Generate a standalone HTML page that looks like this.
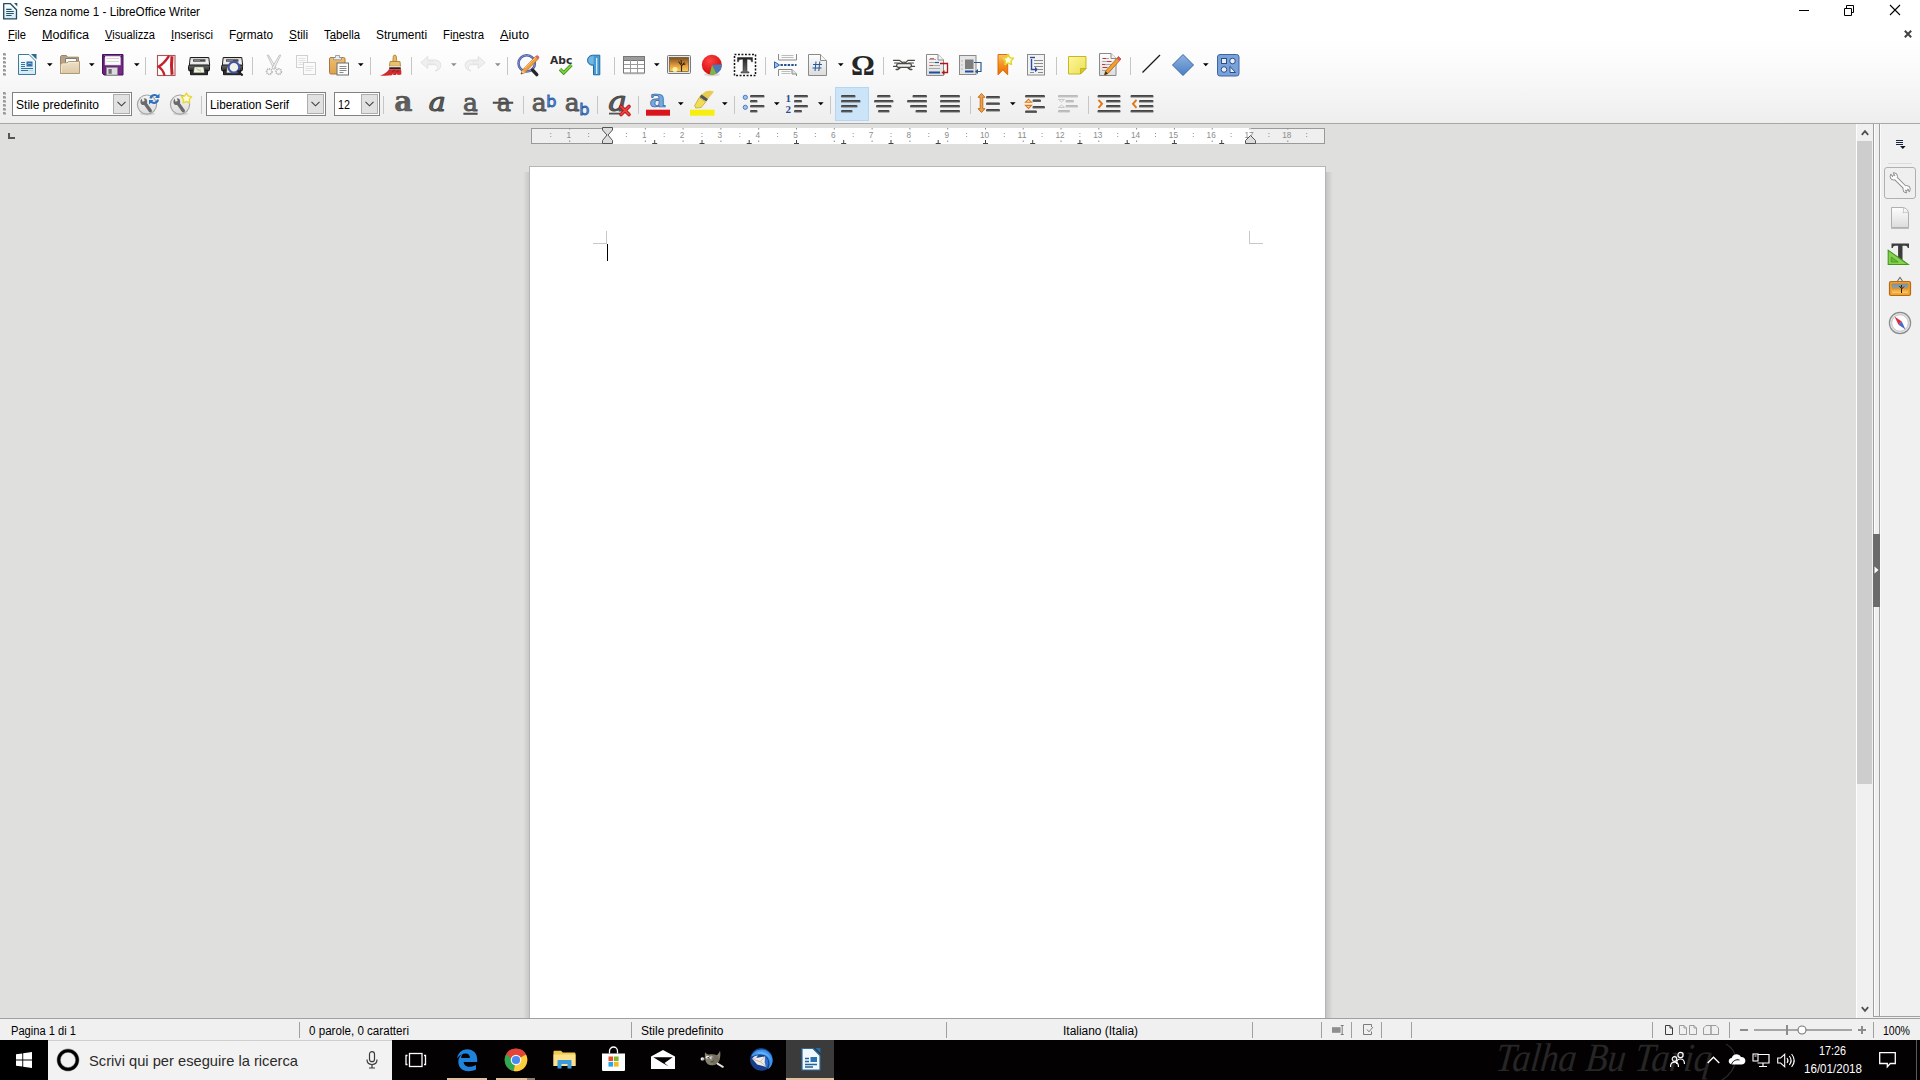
<!DOCTYPE html>
<html lang="it"><head><meta charset="utf-8"><title>Senza nome 1 - LibreOffice Writer</title>
<style>
html,body{margin:0;padding:0}
body{width:1920px;height:1080px;overflow:hidden;position:relative;background:#dfdfde;font-family:"Liberation Sans",sans-serif;font-size:12px;color:#000}
body div,body svg{position:absolute;display:block}
svg{overflow:visible}
u{text-decoration:underline;text-underline-offset:1px}
</style></head><body>
<div style="left:0px;top:0px;width:1920px;height:36px;background:#fff;"></div>
<div style="left:0px;top:36px;width:1920px;height:87px;background:linear-gradient(#fff,#fbfbfb 35%,#eeeeee);"></div>
<div style="left:0px;top:123px;width:1920px;height:1px;background:#a8a8a8;"></div>
<div style="left:24px;top:4px;font-size:12px;line-height:16px;color:#000;white-space:nowrap;transform-origin:0 0;transform:scaleX(0.9726);">Senza nome 1 - LibreOffice Writer</div>
<svg style="left:1799px;top:4px;" width="102" height="12" viewBox="0 0 102 12"><path d="M0 6.5h10" stroke="#000" fill="none"/><path d="M45.5 4.5h7v7h-7zM47.5 4.5v-3h7v7h-2" stroke="#000" fill="none"/><path d="M91 1l10 10M101 1l-10 10" stroke="#000" fill="none" stroke-width="1.1"/></svg>
<svg style="left:1904px;top:30px;" width="8" height="8" viewBox="0 0 8 8"><path d="M0.8 0.8l6.4 6.4M7.2 0.8l-6.4 6.4" stroke="#444" stroke-width="2" fill="none"/></svg>
<div style="left:8px;top:27px;font-size:12px;line-height:16px;color:#000;white-space:nowrap;transform-origin:0 0;transform:scaleX(0.9309);"><u>F</u>ile</div>
<div style="left:42px;top:27px;font-size:12px;line-height:16px;color:#000;white-space:nowrap;transform-origin:0 0;transform:scaleX(1.0518);"><u>M</u>odifica</div>
<div style="left:105px;top:27px;font-size:12px;line-height:16px;color:#000;white-space:nowrap;transform-origin:0 0;transform:scaleX(0.9293);"><u>V</u>isualizza</div>
<div style="left:171px;top:27px;font-size:12px;line-height:16px;color:#000;white-space:nowrap;transform-origin:0 0;transform:scaleX(0.9543);"><u>I</u>nserisci</div>
<div style="left:229px;top:27px;font-size:12px;line-height:16px;color:#000;white-space:nowrap;transform-origin:0 0;transform:scaleX(0.9848);">F<u>o</u>rmato</div>
<div style="left:289px;top:27px;font-size:12px;line-height:16px;color:#000;white-space:nowrap;transform-origin:0 0;transform:scaleX(0.9826);"><u>S</u>tili</div>
<div style="left:324px;top:27px;font-size:12px;line-height:16px;color:#000;white-space:nowrap;transform-origin:0 0;transform:scaleX(0.9467);">T<u>a</u>bella</div>
<div style="left:376px;top:27px;font-size:12px;line-height:16px;color:#000;white-space:nowrap;transform-origin:0 0;transform:scaleX(0.9932);">Str<u>u</u>menti</div>
<div style="left:443px;top:27px;font-size:12px;line-height:16px;color:#000;white-space:nowrap;transform-origin:0 0;transform:scaleX(0.9458);">Fi<u>n</u>estra</div>
<div style="left:500px;top:27px;font-size:12px;line-height:16px;color:#000;white-space:nowrap;transform-origin:0 0;transform:scaleX(1.0603);"><u>A</u>iuto</div>
<div style="left:8px;top:133px;width:2px;height:6px;background:#555;"></div>
<div style="left:8px;top:137px;width:7px;height:2px;background:#555;"></div>
<div style="left:531px;top:128px;width:794px;height:16px;background:#efefef;box-sizing:border-box;border:1px solid #9a9a9a;"></div>
<div style="left:607px;top:128px;width:644px;height:16px;background:#fff;"></div>
<svg style="left:0;top:127px" width="1400" height="20" viewBox="0 0 1400 20"><text x="568.7" y="11" font-size="9.5" fill="#8c8c8c" text-anchor="middle" font-family="Liberation Sans, sans-serif" textLength="4.6" lengthAdjust="spacingAndGlyphs">1</text><rect x="569.2" y="1" width="1" height="1.5" fill="#8a8a8a"/><rect x="569.2" y="13.5" width="1" height="1.5" fill="#8a8a8a"/><rect x="588.1" y="6" width="1" height="1" fill="#959595"/><rect x="588.1" y="9" width="1" height="1" fill="#959595"/><rect x="550.3" y="6" width="1" height="1" fill="#959595"/><rect x="550.3" y="9" width="1" height="1" fill="#959595"/><text x="644.3" y="11" font-size="9.5" fill="#8c8c8c" text-anchor="middle" font-family="Liberation Sans, sans-serif" textLength="4.6" lengthAdjust="spacingAndGlyphs">1</text><rect x="644.8" y="1" width="1" height="1.5" fill="#8a8a8a"/><rect x="644.8" y="13.5" width="1" height="1.5" fill="#8a8a8a"/><text x="682.1" y="11" font-size="9.5" fill="#8c8c8c" text-anchor="middle" font-family="Liberation Sans, sans-serif" textLength="4.6" lengthAdjust="spacingAndGlyphs">2</text><rect x="682.6" y="1" width="1" height="1.5" fill="#8a8a8a"/><rect x="682.6" y="13.5" width="1" height="1.5" fill="#8a8a8a"/><text x="719.9" y="11" font-size="9.5" fill="#8c8c8c" text-anchor="middle" font-family="Liberation Sans, sans-serif" textLength="4.6" lengthAdjust="spacingAndGlyphs">3</text><rect x="720.4" y="1" width="1" height="1.5" fill="#8a8a8a"/><rect x="720.4" y="13.5" width="1" height="1.5" fill="#8a8a8a"/><text x="757.7" y="11" font-size="9.5" fill="#8c8c8c" text-anchor="middle" font-family="Liberation Sans, sans-serif" textLength="4.6" lengthAdjust="spacingAndGlyphs">4</text><rect x="758.2" y="1" width="1" height="1.5" fill="#8a8a8a"/><rect x="758.2" y="13.5" width="1" height="1.5" fill="#8a8a8a"/><text x="795.5" y="11" font-size="9.5" fill="#8c8c8c" text-anchor="middle" font-family="Liberation Sans, sans-serif" textLength="4.6" lengthAdjust="spacingAndGlyphs">5</text><rect x="796.0" y="1" width="1" height="1.5" fill="#8a8a8a"/><rect x="796.0" y="13.5" width="1" height="1.5" fill="#8a8a8a"/><text x="833.3" y="11" font-size="9.5" fill="#8c8c8c" text-anchor="middle" font-family="Liberation Sans, sans-serif" textLength="4.6" lengthAdjust="spacingAndGlyphs">6</text><rect x="833.8" y="1" width="1" height="1.5" fill="#8a8a8a"/><rect x="833.8" y="13.5" width="1" height="1.5" fill="#8a8a8a"/><text x="871.1" y="11" font-size="9.5" fill="#8c8c8c" text-anchor="middle" font-family="Liberation Sans, sans-serif" textLength="4.6" lengthAdjust="spacingAndGlyphs">7</text><rect x="871.6" y="1" width="1" height="1.5" fill="#8a8a8a"/><rect x="871.6" y="13.5" width="1" height="1.5" fill="#8a8a8a"/><text x="908.9" y="11" font-size="9.5" fill="#8c8c8c" text-anchor="middle" font-family="Liberation Sans, sans-serif" textLength="4.6" lengthAdjust="spacingAndGlyphs">8</text><rect x="909.4" y="1" width="1" height="1.5" fill="#8a8a8a"/><rect x="909.4" y="13.5" width="1" height="1.5" fill="#8a8a8a"/><text x="946.7" y="11" font-size="9.5" fill="#8c8c8c" text-anchor="middle" font-family="Liberation Sans, sans-serif" textLength="4.6" lengthAdjust="spacingAndGlyphs">9</text><rect x="947.2" y="1" width="1" height="1.5" fill="#8a8a8a"/><rect x="947.2" y="13.5" width="1" height="1.5" fill="#8a8a8a"/><text x="984.5" y="11" font-size="9.5" fill="#8c8c8c" text-anchor="middle" font-family="Liberation Sans, sans-serif" textLength="9.2" lengthAdjust="spacingAndGlyphs">10</text><rect x="985.0" y="1" width="1" height="1.5" fill="#8a8a8a"/><rect x="985.0" y="13.5" width="1" height="1.5" fill="#8a8a8a"/><text x="1022.2" y="11" font-size="9.5" fill="#8c8c8c" text-anchor="middle" font-family="Liberation Sans, sans-serif" textLength="9.2" lengthAdjust="spacingAndGlyphs">11</text><rect x="1022.7" y="1" width="1" height="1.5" fill="#8a8a8a"/><rect x="1022.7" y="13.5" width="1" height="1.5" fill="#8a8a8a"/><text x="1060.0" y="11" font-size="9.5" fill="#8c8c8c" text-anchor="middle" font-family="Liberation Sans, sans-serif" textLength="9.2" lengthAdjust="spacingAndGlyphs">12</text><rect x="1060.5" y="1" width="1" height="1.5" fill="#8a8a8a"/><rect x="1060.5" y="13.5" width="1" height="1.5" fill="#8a8a8a"/><text x="1097.8" y="11" font-size="9.5" fill="#8c8c8c" text-anchor="middle" font-family="Liberation Sans, sans-serif" textLength="9.2" lengthAdjust="spacingAndGlyphs">13</text><rect x="1098.3" y="1" width="1" height="1.5" fill="#8a8a8a"/><rect x="1098.3" y="13.5" width="1" height="1.5" fill="#8a8a8a"/><text x="1135.6" y="11" font-size="9.5" fill="#8c8c8c" text-anchor="middle" font-family="Liberation Sans, sans-serif" textLength="9.2" lengthAdjust="spacingAndGlyphs">14</text><rect x="1136.1" y="1" width="1" height="1.5" fill="#8a8a8a"/><rect x="1136.1" y="13.5" width="1" height="1.5" fill="#8a8a8a"/><text x="1173.4" y="11" font-size="9.5" fill="#8c8c8c" text-anchor="middle" font-family="Liberation Sans, sans-serif" textLength="9.2" lengthAdjust="spacingAndGlyphs">15</text><rect x="1173.9" y="1" width="1" height="1.5" fill="#8a8a8a"/><rect x="1173.9" y="13.5" width="1" height="1.5" fill="#8a8a8a"/><text x="1211.2" y="11" font-size="9.5" fill="#8c8c8c" text-anchor="middle" font-family="Liberation Sans, sans-serif" textLength="9.2" lengthAdjust="spacingAndGlyphs">16</text><rect x="1211.7" y="1" width="1" height="1.5" fill="#8a8a8a"/><rect x="1211.7" y="13.5" width="1" height="1.5" fill="#8a8a8a"/><text x="1249.0" y="11" font-size="9.5" fill="#8c8c8c" text-anchor="middle" font-family="Liberation Sans, sans-serif" textLength="9.2" lengthAdjust="spacingAndGlyphs">17</text><rect x="1249.5" y="1" width="1" height="1.5" fill="#8a8a8a"/><rect x="1249.5" y="13.5" width="1" height="1.5" fill="#8a8a8a"/><text x="1286.8" y="11" font-size="9.5" fill="#8c8c8c" text-anchor="middle" font-family="Liberation Sans, sans-serif" textLength="9.2" lengthAdjust="spacingAndGlyphs">18</text><rect x="1287.3" y="1" width="1" height="1.5" fill="#8a8a8a"/><rect x="1287.3" y="13.5" width="1" height="1.5" fill="#8a8a8a"/><rect x="625.9" y="6" width="1" height="1" fill="#959595"/><rect x="625.9" y="9" width="1" height="1" fill="#959595"/><rect x="663.7" y="6" width="1" height="1" fill="#959595"/><rect x="663.7" y="9" width="1" height="1" fill="#959595"/><rect x="701.5" y="6" width="1" height="1" fill="#959595"/><rect x="701.5" y="9" width="1" height="1" fill="#959595"/><rect x="739.3" y="6" width="1" height="1" fill="#959595"/><rect x="739.3" y="9" width="1" height="1" fill="#959595"/><rect x="777.1" y="6" width="1" height="1" fill="#959595"/><rect x="777.1" y="9" width="1" height="1" fill="#959595"/><rect x="814.9" y="6" width="1" height="1" fill="#959595"/><rect x="814.9" y="9" width="1" height="1" fill="#959595"/><rect x="852.7" y="6" width="1" height="1" fill="#959595"/><rect x="852.7" y="9" width="1" height="1" fill="#959595"/><rect x="890.5" y="6" width="1" height="1" fill="#959595"/><rect x="890.5" y="9" width="1" height="1" fill="#959595"/><rect x="928.3" y="6" width="1" height="1" fill="#959595"/><rect x="928.3" y="9" width="1" height="1" fill="#959595"/><rect x="966.1" y="6" width="1" height="1" fill="#959595"/><rect x="966.1" y="9" width="1" height="1" fill="#959595"/><rect x="1003.8" y="6" width="1" height="1" fill="#959595"/><rect x="1003.8" y="9" width="1" height="1" fill="#959595"/><rect x="1041.6" y="6" width="1" height="1" fill="#959595"/><rect x="1041.6" y="9" width="1" height="1" fill="#959595"/><rect x="1079.4" y="6" width="1" height="1" fill="#959595"/><rect x="1079.4" y="9" width="1" height="1" fill="#959595"/><rect x="1117.2" y="6" width="1" height="1" fill="#959595"/><rect x="1117.2" y="9" width="1" height="1" fill="#959595"/><rect x="1155.0" y="6" width="1" height="1" fill="#959595"/><rect x="1155.0" y="9" width="1" height="1" fill="#959595"/><rect x="1192.8" y="6" width="1" height="1" fill="#959595"/><rect x="1192.8" y="9" width="1" height="1" fill="#959595"/><rect x="1230.6" y="6" width="1" height="1" fill="#959595"/><rect x="1230.6" y="9" width="1" height="1" fill="#959595"/><rect x="1268.4" y="6" width="1" height="1" fill="#959595"/><rect x="1268.4" y="9" width="1" height="1" fill="#959595"/><rect x="1306.2" y="6" width="1" height="1" fill="#959595"/><rect x="1306.2" y="9" width="1" height="1" fill="#959595"/><path d="M652.2 16.5h5M654.7 13v3.5" stroke="#444" fill="none"/><path d="M699.5 16.5h5M702.0 13v3.5" stroke="#444" fill="none"/><path d="M746.7 16.5h5M749.2 13v3.5" stroke="#444" fill="none"/><path d="M794.0 16.5h5M796.5 13v3.5" stroke="#444" fill="none"/><path d="M841.2 16.5h5M843.7 13v3.5" stroke="#444" fill="none"/><path d="M888.5 16.5h5M891.0 13v3.5" stroke="#444" fill="none"/><path d="M935.7 16.5h5M938.2 13v3.5" stroke="#444" fill="none"/><path d="M983.0 16.5h5M985.5 13v3.5" stroke="#444" fill="none"/><path d="M1030.2 16.5h5M1032.7 13v3.5" stroke="#444" fill="none"/><path d="M1077.4 16.5h5M1079.9 13v3.5" stroke="#444" fill="none"/><path d="M1124.7 16.5h5M1127.2 13v3.5" stroke="#444" fill="none"/><path d="M1171.9 16.5h5M1174.4 13v3.5" stroke="#444" fill="none"/><path d="M1219.2 16.5h5M1221.7 13v3.5" stroke="#444" fill="none"/><path d="M602.5 0.5h10v2.5l-4.5 5 4.5 5.5v3h-10v-3l4.5-5.5-4.5-5z" fill="#ddd" stroke="#555"/><path d="M1245.5 16.5v-3l5-5 5 5v3z" fill="#ddd" stroke="#555"/></svg>
<div style="left:523px;top:172px;width:6px;height:846px;background:linear-gradient(to right,rgba(0,0,0,0),rgba(0,0,0,.10));"></div>
<div style="left:1326px;top:172px;width:7px;height:846px;background:linear-gradient(to left,rgba(0,0,0,0),rgba(0,0,0,.12));"></div>
<div style="left:529px;top:166px;width:797px;height:852px;background:#b6b6b6;"></div>
<div style="left:530px;top:167px;width:795px;height:851px;background:#fff;"></div>
<div style="left:606px;top:231px;width:1px;height:13px;background:#c8c8c8;"></div>
<div style="left:593px;top:243px;width:13px;height:1px;background:#c8c8c8;"></div>
<div style="left:1249px;top:231px;width:1px;height:13px;background:#c8c8c8;"></div>
<div style="left:1249px;top:243px;width:14px;height:1px;background:#c8c8c8;"></div>
<div style="left:607px;top:244px;width:1px;height:17px;background:#000;"></div>
<div style="left:1856px;top:124px;width:17px;height:894px;background:#f0f0f0;"></div>
<div style="left:1856px;top:124px;width:1px;height:894px;background:#fdfdfd;"></div>
<div style="left:1857px;top:141px;width:15px;height:643px;background:#cdcdcd;"></div>
<svg style="left:1861px;top:129px;" width="8" height="7" viewBox="0 0 8 7"><path d="M0.8 5.8L4 2.2 7.2 5.8" stroke="#505050" stroke-width="1.8" fill="none"/></svg>
<svg style="left:1861px;top:1006px;" width="8" height="7" viewBox="0 0 8 7"><path d="M0.8 1.2L4 4.8 7.2 1.2" stroke="#505050" stroke-width="1.8" fill="none"/></svg>
<div style="left:1873px;top:124px;width:47px;height:894px;background:#f0f0f0;"></div>
<div style="left:1873px;top:124px;width:1px;height:894px;background:#a0a0a0;"></div>
<div style="left:1874px;top:124px;width:1px;height:894px;background:#fdfdfd;"></div>
<div style="left:1875px;top:124px;width:4px;height:894px;background:#f0f0f0;"></div>
<div style="left:1879px;top:124px;width:1px;height:894px;background:#a0a0a0;"></div>
<div style="left:1880px;top:124px;width:1px;height:892px;background:#fbfbfb;"></div>
<div style="left:1873px;top:1016px;width:47px;height:1px;background:#a0a0a0;"></div>
<div style="left:1873px;top:1017px;width:47px;height:1px;background:#f0f0f0;"></div>
<div style="left:1873px;top:534px;width:7px;height:73px;background:#6b6b6b;"></div>
<svg style="left:1874px;top:566px;" width="5" height="8" viewBox="0 0 5 8"><path d="M0.5 0.5L4.5 4 0.5 7.5z" fill="#fff"/></svg>
<div style="left:0px;top:1018px;width:1920px;height:1px;background:#a0a0a0;"></div>
<div style="left:0px;top:1019px;width:1920px;height:21px;background:#f0f0f0;"></div>
<div style="left:299px;top:1022px;width:1px;height:16px;background:#a0a0a0;"></div>
<div style="left:631px;top:1022px;width:1px;height:16px;background:#a0a0a0;"></div>
<div style="left:946px;top:1022px;width:1px;height:16px;background:#a0a0a0;"></div>
<div style="left:1252px;top:1022px;width:1px;height:16px;background:#a0a0a0;"></div>
<div style="left:1321px;top:1022px;width:1px;height:16px;background:#a0a0a0;"></div>
<div style="left:1351px;top:1022px;width:1px;height:16px;background:#a0a0a0;"></div>
<div style="left:1381px;top:1022px;width:1px;height:16px;background:#a0a0a0;"></div>
<div style="left:1411px;top:1022px;width:1px;height:16px;background:#a0a0a0;"></div>
<div style="left:1652px;top:1022px;width:1px;height:16px;background:#a0a0a0;"></div>
<div style="left:1729px;top:1022px;width:1px;height:16px;background:#a0a0a0;"></div>
<div style="left:1873px;top:1022px;width:1px;height:16px;background:#a0a0a0;"></div>
<div style="left:11px;top:1023px;font-size:12px;line-height:16px;color:#000;white-space:nowrap;transform-origin:0 0;transform:scaleX(0.9278);">Pagina 1 di 1</div>
<div style="left:309px;top:1023px;font-size:12px;line-height:16px;color:#000;white-space:nowrap;transform-origin:0 0;transform:scaleX(0.9672);">0 parole, 0 caratteri</div>
<div style="left:641px;top:1023px;font-size:12px;line-height:16px;color:#000;white-space:nowrap;transform-origin:0 0;transform:scaleX(0.9974);">Stile predefinito</div>
<div style="left:1063px;top:1023px;font-size:12px;line-height:16px;color:#000;white-space:nowrap;transform-origin:0 0;transform:scaleX(0.9951);">Italiano (Italia)</div>
<div style="left:1883px;top:1023px;font-size:12px;line-height:16px;color:#000;white-space:nowrap;transform-origin:0 0;transform:scaleX(0.8797);">100%</div>
<svg style="left:3px;top:3px;" width="15" height="17" viewBox="0 0 15 17"><path d="M.7 .7h6.800l6 6v9.200h-12.800z" fill="url(#gDoc)" stroke="#1f4c5e" stroke-width="1.300" stroke-linejoin="round"/><path d="M11 0h3.300v3.600z" fill="#1a5c74"/><path d="M3.200 6.400h5.400M3.200 8.500h7.600M3.200 10.500h7.600M3.200 12.500h5.400" stroke="#1f5568" stroke-width="1.100" fill="none"/></svg>
<svg style="left:1896px;top:140px;" width="10" height="10" viewBox="0 0 10 10"><path d="M0 .5h7M0 2.500h7M0 4.500h7" stroke="#1a2340" fill="none"/><path d="M4 6h5.600l-2.800 3z" fill="#10131c"/></svg>
<div style="left:1888px;top:163px;width:24px;height:1px;background:#dcdcdc;"></div>
<div style="left:1884px;top:167px;width:32px;height:32px;box-sizing:border-box;border:1px solid #b0b0b0;border-radius:3px;background:#efefef;"></div>
<svg style="left:1888px;top:171px;" width="24" height="24" viewBox="0 0 24 24"><path d="M7.3 6.9L17.1 16.7" stroke="#8f8f8f" stroke-width="4.400" stroke-linecap="round"/><circle cx="5.8" cy="5.4" r="3.700" fill="#fbfbfb" stroke="#8f8f8f" stroke-width="1"/><circle cx="18.6" cy="18.2" r="3.700" fill="#fbfbfb" stroke="#8f8f8f" stroke-width="1"/><path d="M7.3 6.9L17.1 16.7" stroke="#fbfbfb" stroke-width="2.400" stroke-linecap="round"/><path d="M5.70 5.23L3.25 0.87" stroke="#efefef" stroke-width="2.600"/><path d="M5.26 1.80L6.83 4.59A1.3 1.3 0 0 0 4.57 5.86L3.00 3.08" fill="none" stroke="#8f8f8f" stroke-width="1"/><path d="M18.68 18.38L20.65 22.98" stroke="#efefef" stroke-width="2.600"/><path d="M18.74 21.84L17.48 18.90A1.3 1.3 0 0 0 19.87 17.87L21.13 20.81" fill="none" stroke="#8f8f8f" stroke-width="1"/></svg>
<svg style="left:1890px;top:206px;" width="20" height="23" viewBox="0 0 20 23"><path d="M1.500 1.500h11.500c3 .5 5 2.500 5.500 5.500v14.500h-17z" fill="url(#gPaper)" stroke="#b0b0b0"/><path d="M13 1.500c.8 2 .8 3.800 0 5.200 1.800-.6 3.600-.5 5.500.3" fill="#f8f8f8" stroke="#b8b8b8" stroke-width=".8"/><path d="M1 22.500h18" stroke="#9a9a9a" stroke-opacity=".6"/></svg>
<svg style="left:1887px;top:242px;" width="24" height="24" viewBox="0 0 24 24"><path d="M4.500 1.500h17.500v4.500h-1.200c-.3-1.500-1-2.200-2.500-2.200h-2.800v13.700c0 1.200.6 1.500 2.300 1.500v1h-9v-1c1.700 0 2.300-.3 2.300-1.500v-13.700h-2.800c-1.500 0-2.200.7-2.500 2.200h-1.300z" fill="#3c3c3c"/><path d="M1.200 8.200v14.300h20z" fill="#8ad050" stroke="#3f9a20" stroke-width="1.100"/><path d="M4.200 15v5h7z" fill="#6cb83a" stroke="#3f9a20" stroke-width=".8"/></svg>
<svg style="left:1888px;top:276px;" width="24" height="21" viewBox="0 0 24 21"><path d="M9.500 5l2.500-3.500 2.500 3.500" fill="none" stroke="#6a6a6a" stroke-width="1.100"/><rect x="1.500" y="5.500" width="21" height="14" rx="1.500" fill="#f0a030" stroke="#b86a10" stroke-width="1.200"/><rect x="3.800" y="7.800" width="16.400" height="9.400" fill="url(#gSun)"/><rect x="3.800" y="7.800" width="16.400" height="4" fill="#7fa8c8" opacity=".75"/><path d="M13.500 17v-4.500l-2.200-2.500M13.500 13l2.500-2.500M13.500 11.500v-2.500" stroke="#2a1a0a" stroke-width="1" fill="none"/></svg>
<svg style="left:1888px;top:311px;" width="24" height="24" viewBox="0 0 24 24"><circle cx="12" cy="12" r="10.600" fill="#e4e4e4" stroke="#8c8c8c" stroke-width="1.200"/><circle cx="12" cy="12" r="8.300" fill="#fcfcfc" stroke="#b8b8b8" stroke-width=".8"/><path d="M6.500 5.500l7.300 5-3.300 3.300z" fill="#e02a3a"/><path d="M17.500 18.500l-7-4.700 3.300-3.300z" fill="#4a6ac8"/></svg>
<svg style="left:1332px;top:1025px;" width="12" height="10" viewBox="0 0 12 10"><rect x="0" y="2.200" width="8.600" height="5.600" fill="#8e8e8e"/><path d="M8.700 .5h3M8.700 9.500h3M10.200 .5v9" stroke="#7c7c7c" fill="none"/></svg>
<svg style="left:1363px;top:1024px;" width="11" height="11" viewBox="0 0 11 11"><path d="M8.500 3v-2.500h-8v10h8v-3" fill="none" stroke="#7c7c7c"/><path d="M4 5.500l2 2.300 4-4.800" fill="none" stroke="#7c7c7c"/></svg>
<svg style="left:1665px;top:1025px;" width="8" height="10" viewBox="0 0 8 10"><path d="M0.5 .5h4.500l2.500 2.500v6.500h-7z" fill="none" stroke="#3c3c3c"/><path d="M5 .5v2.500h2.500" fill="none" stroke="#3c3c3c"/></svg>
<svg style="left:1679px;top:1025px;" width="18" height="10" viewBox="0 0 18 10"><path d="M0.5 .5h4.500l2.500 2.500v6.500h-7z" fill="none" stroke="#9c9c9c"/><path d="M5 .5v2.500h2.500" fill="none" stroke="#9c9c9c"/><path d="M10.5 .5h4.500l2.500 2.500v6.500h-7z" fill="none" stroke="#9c9c9c"/><path d="M15 .5v2.500h2.500" fill="none" stroke="#9c9c9c"/></svg>
<svg style="left:1703px;top:1025px;" width="16" height="10" viewBox="0 0 16 10"><path d="M.5 9.500v-6.500l2.500-2.500h5v9zM8 9.500v-9h5l2.500 2.500v6.500z" fill="none" stroke="#9c9c9c"/></svg>
<div style="left:1740px;top:1029px;width:8px;height:2px;background:#8c8c8c;"></div>
<div style="left:1754px;top:1029px;width:98px;height:2px;background:#a6a6a6;"></div>
<div style="left:1786px;top:1025px;width:2px;height:10px;background:#8c8c8c;"></div>
<svg style="left:1797px;top:1025px;" width="10" height="10" viewBox="0 0 10 10"><circle cx="5" cy="5" r="4" fill="#fff" stroke="#767676" stroke-width="1.100"/></svg>
<div style="left:1858px;top:1029px;width:8px;height:2px;background:#8c8c8c;"></div>
<div style="left:1861px;top:1026px;width:2px;height:8px;background:#8c8c8c;"></div>
<svg width="0" height="0" style="left:0;top:0"><defs>
<linearGradient id="gDoc" x1="0" y1="0" x2="0" y2="1"><stop offset="0" stop-color="#fff"/><stop offset="1" stop-color="#d4e9f4"/></linearGradient>
<linearGradient id="gPaper" x1="0" y1="0" x2="0" y2="1"><stop offset="0" stop-color="#fdfdfd"/><stop offset="1" stop-color="#dcdcdc"/></linearGradient>
<linearGradient id="gFold" x1="0" y1="0" x2="0" y2="1"><stop offset="0" stop-color="#eee0c8"/><stop offset="1" stop-color="#dcc8a6"/></linearGradient>
<linearGradient id="gPurp" x1="0" y1="0" x2="1" y2="1"><stop offset="0" stop-color="#5a1a6a"/><stop offset="1" stop-color="#7a2c8e"/></linearGradient>
<linearGradient id="gPrn" x1="0" y1="0" x2="0" y2="1"><stop offset="0" stop-color="#f4f4f4"/><stop offset="1" stop-color="#b8b8b8"/></linearGradient>
<linearGradient id="gPrn2" x1="0" y1="0" x2="0" y2="1"><stop offset="0" stop-color="#c8c8c8"/><stop offset=".45" stop-color="#f4f4f4"/><stop offset="1" stop-color="#dedede"/></linearGradient>
<linearGradient id="gDark" x1="0" y1="0" x2="0" y2="1"><stop offset="0" stop-color="#6a6a6a"/><stop offset="1" stop-color="#2c2c2c"/></linearGradient>
<linearGradient id="gBar" x1="0" y1="0" x2="0" y2="1"><stop offset="0" stop-color="#3a3a3a"/><stop offset="1" stop-color="#6e6e6e"/></linearGradient>
<linearGradient id="gBlue" x1="0" y1="0" x2="0" y2="1"><stop offset="0" stop-color="#8fb3e0"/><stop offset="1" stop-color="#4a7fc4"/></linearGradient>
<linearGradient id="gYel" x1="0" y1="0" x2="1" y2="1"><stop offset="0" stop-color="#fdf6a0"/><stop offset="1" stop-color="#ece050"/></linearGradient>
<linearGradient id="gOr" x1="0" y1="0" x2="0" y2="1"><stop offset="0" stop-color="#f9c46a"/><stop offset=".5" stop-color="#f59020"/><stop offset="1" stop-color="#ea6c00"/></linearGradient>
<linearGradient id="gClip" x1="0" y1="0" x2="0" y2="1"><stop offset="0" stop-color="#efbe70"/><stop offset="1" stop-color="#dda24c"/></linearGradient>
<linearGradient id="gSun" x1="0" y1="0" x2="0" y2="1"><stop offset="0" stop-color="#7a5020"/><stop offset="0.6" stop-color="#e8a040"/><stop offset="1" stop-color="#f8d060"/></linearGradient>
<radialGradient id="gRed" cx="0.4" cy="0.3" r="0.8"><stop offset="0" stop-color="#f44"/><stop offset="1" stop-color="#c00"/></radialGradient>
<linearGradient id="gT" x1="0" y1="0" x2="0" y2="1"><stop offset="0" stop-color="#222"/><stop offset="1" stop-color="#707070"/></linearGradient>
<linearGradient id="gCirc" x1="0" y1="0" x2="0" y2="1"><stop offset="0" stop-color="#f4f4f4"/><stop offset="1" stop-color="#dcdcdc"/></linearGradient>
<linearGradient id="gA" x1="0" y1="0" x2="0" y2="1"><stop offset="0" stop-color="#4a4a4a"/><stop offset="1" stop-color="#6c6c6c"/></linearGradient>
</defs></svg>
<svg style="left:3px;top:53px" width="4" height="24" viewBox="0 0 4 24"><path d="M0 0h2l1 1v1.5h-3z" fill="#9a9a9a"/><path d="M0 4h2l1 1v1.5h-3z" fill="#9a9a9a"/><path d="M0 8h2l1 1v1.5h-3z" fill="#9a9a9a"/><path d="M0 12h2l1 1v1.5h-3z" fill="#9a9a9a"/><path d="M0 16h2l1 1v1.5h-3z" fill="#9a9a9a"/><path d="M0 20h2l1 1v1.5h-3z" fill="#9a9a9a"/></svg>
<svg style="left:3px;top:92px" width="4" height="24" viewBox="0 0 4 24"><path d="M0 0h2l1 1v1.5h-3z" fill="#9a9a9a"/><path d="M0 4h2l1 1v1.5h-3z" fill="#9a9a9a"/><path d="M0 8h2l1 1v1.5h-3z" fill="#9a9a9a"/><path d="M0 12h2l1 1v1.5h-3z" fill="#9a9a9a"/><path d="M0 16h2l1 1v1.5h-3z" fill="#9a9a9a"/><path d="M0 20h2l1 1v1.5h-3z" fill="#9a9a9a"/></svg>
<svg style="left:15px;top:53px" width="24" height="24" viewBox="0 0 24 24"><path d="M3.5 1.5h10.5l6.5 6.5v13.5h-17z" fill="url(#gDoc)" stroke="#3d7b9e"/><path d="M16 1h5.5v5.5z" fill="#2b6a8c"/><path d="M6 9.5h4M6 11.5h4M6 13.5h4M6 15.5h12M6 17.5h7" stroke="#2f7797" fill="none"/><path d="M13 17.5h5" stroke="#b9d3e0" fill="none"/><rect x="11.5" y="8.5" width="6" height="5" fill="#2f6fa3"/><path d="M12.5 11.5l1.5-1.5 1 1 .8-.8 1 1.300" stroke="#a8c8e8" fill="none" stroke-width=".8"/></svg>
<svg style="left:47px;top:63px" width="6" height="4" viewBox="0 0 6 4"><path d="M0 0.3h5.6L2.8 3.3z" fill="#000"/></svg>
<svg style="left:58px;top:53px" width="24" height="24" viewBox="0 0 24 24"><path d="M2.500 20.500v-16.800l.9-1.200h5l1.200 1.700h10.900v16.300z" fill="#b7a288" stroke="#9a8565" stroke-linejoin="round"/><path d="M7.500 5.500h11v8h-11z" fill="url(#gPaper)" stroke="#7d7d7d"/><path d="M9 7.200h8" stroke="#fff" stroke-width="1.400"/><path d="M2.500 20.500v-8.500l1.500-2h5l1.500-1.500h11v12z" fill="url(#gFold)" stroke="#b09a76" stroke-linejoin="round"/><path d="M3.500 19.500v-7l1-1.500h5l1.500-1.500h9.500" fill="none" stroke="#f6ecd8" stroke-width=".8"/></svg>
<svg style="left:89px;top:63px" width="6" height="4" viewBox="0 0 6 4"><path d="M0 0.3h5.6L2.8 3.3z" fill="#000"/></svg>
<svg style="left:101px;top:53px" width="24" height="24" viewBox="0 0 24 24"><path d="M1.500 1.500h20.500v20.500h-19l-1.500-1.500z" fill="url(#gPurp)" stroke="#47125a" stroke-linejoin="round"/><rect x="4" y="2.500" width="15.500" height="9.500" fill="#fbfbfb" stroke="#cfc4d6" stroke-width=".6"/><path d="M4 2.700h15.500" stroke="#5b1d70" stroke-width=".9"/><path d="M5.500 5.500h12.500M5.500 8.500h12.500" stroke="#cdcdcd" fill="none" stroke-width=".8"/><path d="M3.500 3.200v1M20 3.200v1" stroke="#2a0a36" stroke-width="1"/><rect x="5.500" y="14.500" width="11" height="7.500" fill="#dcdcdc" stroke="#8a8a8a" stroke-width=".7"/><rect x="7.500" y="16" width="3.200" height="4.800" fill="#6e6e6e"/></svg>
<svg style="left:134px;top:63px" width="6" height="4" viewBox="0 0 6 4"><path d="M0 0.3h5.6L2.8 3.3z" fill="#000"/></svg>
<div style="left:145px;top:57px;width:1px;height:18px;background:#c6c6c6;"></div>
<svg style="left:154px;top:53px" width="24" height="24" viewBox="0 0 24 24"><rect x="3.500" y="2.500" width="17.500" height="20" fill="#fdfdfd" stroke="#a85858" stroke-width="1.100"/><path d="M14.600 3.500Q10 10.500 4.800 13.600Q8.800 16.500 10.300 21.500" fill="none" stroke="#c4212c" stroke-width="2.300" stroke-linecap="round"/><path d="M5 13.600l-1.500 0" stroke="#c4212c" stroke-width="1.600"/><path d="M18 3.200Q16.900 12.500 18.100 21.800" fill="none" stroke="#c4212c" stroke-width="3"/></svg>
<svg style="left:187px;top:53px" width="24" height="24" viewBox="0 0 24 24"><path d="M2.300 12.500l.9-8h18.600l.9 8z" fill="url(#gPrn2)" stroke="#1e1e1e" stroke-linejoin="round"/><rect x="6" y="6.200" width="12.500" height="2.600" rx=".5" fill="#4a4a4a"/><path d="M7.500 7.500h1M9.500 7.500h1M11.500 7.500h1" stroke="#c4c4c4" stroke-width=".9"/><rect x="1.500" y="12" width="21" height="6" rx="1.500" fill="url(#gDark)" stroke="#161616"/><path d="M3.500 21.700v-4.500h17v4.500z" fill="#2c2c2c" stroke="#161616"/><path d="M6.300 20l.9-6.300h9.600l.9 6.300z" fill="#eef5e2" stroke="#333" stroke-width=".7"/><path d="M9 15.500l5 3M10 17h4" stroke="#b8cc90" stroke-width=".8" fill="none"/></svg>
<svg style="left:220px;top:53px" width="24" height="24" viewBox="0 0 24 24"><path d="M2.300 12.500l.9-8h18.600l.9 8z" fill="url(#gPrn2)" stroke="#1e1e1e" stroke-linejoin="round"/><rect x="6" y="6.200" width="12.500" height="2.600" rx=".5" fill="#4a4a4a"/><path d="M7.500 7.500h1M9.500 7.500h1M11.500 7.500h1" stroke="#c4c4c4" stroke-width=".9"/><rect x="1.500" y="12" width="21" height="6" rx="1.500" fill="url(#gDark)" stroke="#161616"/><path d="M3.500 21.700v-4.500h17v4.500z" fill="#2c2c2c" stroke="#161616"/><path d="M6.300 20l.9-6.300h9.600l.9 6.300z" fill="#eef5e2" stroke="#333" stroke-width=".7"/><path d="M9 15.500l5 3M10 17h4" stroke="#b8cc90" stroke-width=".8" fill="none"/><circle cx="13.900" cy="14.200" r="5.300" fill="#f0f4e6" stroke="#4456a8" stroke-width="2.100"/><path d="M18.200 18.500l3.800 3.300" stroke="#222" stroke-width="2.200" stroke-linecap="round"/></svg>
<div style="left:252px;top:57px;width:1px;height:18px;background:#c6c6c6;"></div>
<svg style="left:262px;top:53px" width="24" height="24" viewBox="0 0 24 24"><g fill="#f6f6f6" stroke="#bcbcbc" stroke-width=".9" stroke-linejoin="round"><path d="M5.200 2.200l1.300-.2 7.600 13-2 1.200z"/><path d="M18.800 2.200l-1.300-.2-7.600 13 2 1.200z"/></g><g fill="#f8f8f8" stroke="#b4b4b4" stroke-width="1.700" stroke-dasharray="1.300 .7"><circle cx="7.300" cy="18.600" r="2.700"/><circle cx="16.700" cy="18.600" r="2.700"/></g></svg>
<svg style="left:294px;top:53px" width="24" height="24" viewBox="0 0 24 24"><g opacity=".8"><rect x="2.500" y="2.500" width="11" height="12" fill="#fbfbfb" stroke="#c6c6c6"/><path d="M4.500 5.500h7M4.500 7.500h7M4.500 9.500h7M4.500 11.500h5" stroke="#dcdcdc" fill="none"/><rect x="9.500" y="9.500" width="12" height="12" fill="#fbfbfb" stroke="#c6c6c6"/><path d="M11.500 13.500h8M11.500 15.500h8M11.500 17.500h6" stroke="#dcdcdc" fill="none"/></g></svg>
<svg style="left:327px;top:53px" width="24" height="24" viewBox="0 0 24 24"><rect x="2.500" y="4.500" width="15.500" height="16.500" rx="1.500" fill="url(#gClip)" stroke="#a8783a"/><path d="M6.500 6.800v-2.300h2v-2h4v2h2v2.300z" fill="#ececec" stroke="#8a8a8a" stroke-width=".8"/><rect x="10" y="10" width="11.500" height="12" fill="#fcfcfc" stroke="#6e6e6e"/><path d="M12.500 13.500h7M12.500 15.500h7M12.500 17.500h7M12.500 19.500h4" stroke="#8a8a8a" fill="none"/></svg>
<svg style="left:358px;top:63px" width="6" height="4" viewBox="0 0 6 4"><path d="M0 0.3h5.6L2.8 3.3z" fill="#000"/></svg>
<div style="left:370px;top:57px;width:1px;height:18px;background:#c6c6c6;"></div>
<svg style="left:379px;top:53px" width="24" height="24" viewBox="0 0 24 24"><path d="M14.300 3.300c.2-1.600 2.800-1.600 3 0l.5 5.500h-4z" fill="#e9b964" stroke="#a87a2c" stroke-width=".8"/><path d="M11 8.500h10l.5 4.800h-11z" fill="#e8c070" stroke="#a87a2c" stroke-width=".8"/><path d="M10.500 13.200h11l.1 1.200h-11.200z" fill="#f2efe6"/><path d="M10.400 14.300h11.200l.3 2h-11.800z" fill="#262222"/><path d="M10 16.200h12c.4 2 .5 3.600.3 5.300-1.500.4-2.800.5-4 .3l-.3-1.600-.9 1.800c-1 .1-2 .1-3-.1l.2-1.600-1.400 2c-3.500.5-8 .6-11.900.2 4-1.300 7.500-3.500 9-6.300z" fill="#cf2a2c"/><path d="M13 18.500l3-1.500M17 19l3-1.500" stroke="#8a1418" stroke-width=".7"/></svg>
<div style="left:411px;top:57px;width:1px;height:18px;background:#c6c6c6;"></div>
<svg style="left:419px;top:53px" width="24" height="24" viewBox="0 0 24 24"><path d="M8.800 3.500l-7 6 7 6v-3.800h6c2.500 0 3.800 1.200 3.800 3 0 1.500-.9 2.600-2.500 3.300 3.600-.6 5.700-2.800 5.700-5.800 0-3.200-2.600-5.200-6.600-5.200h-6.400z" fill="#efefef" stroke="#e0e0e0" stroke-width=".9"/><path d="M8 8.200h7M8 10.800h7" stroke="#e2e2e2" stroke-width=".7"/></svg>
<svg style="left:451px;top:63px" width="6" height="4" viewBox="0 0 6 4"><path d="M0 0.3h5.6L2.8 3.3z" fill="#8c8c8c"/></svg>
<svg style="left:463px;top:53px" width="24" height="24" viewBox="0 0 24 24"><g transform="translate(24 0) scale(-1 1)"><path d="M8.800 3.500l-7 6 7 6v-3.800h6c2.500 0 3.800 1.200 3.800 3 0 1.500-.9 2.600-2.500 3.300 3.600-.6 5.700-2.800 5.700-5.800 0-3.200-2.600-5.200-6.600-5.200h-6.400z" fill="#efefef" stroke="#e0e0e0" stroke-width=".9"/><path d="M8 8.200h7M8 10.800h7" stroke="#e2e2e2" stroke-width=".7"/></g></svg>
<svg style="left:495px;top:63px" width="6" height="4" viewBox="0 0 6 4"><path d="M0 0.3h5.6L2.8 3.3z" fill="#8c8c8c"/></svg>
<div style="left:507px;top:57px;width:1px;height:18px;background:#c6c6c6;"></div>
<svg style="left:516px;top:53px" width="24" height="24" viewBox="0 0 24 24"><circle cx="10.700" cy="10.400" r="8.200" fill="#f6f8fb" fill-opacity=".6" stroke="#4a5aa8" stroke-width="2.500"/><circle cx="10.700" cy="10.400" r="8.200" fill="none" stroke="#8e9ad0" stroke-width=".8"/><path d="M16.500 17l4.300 4.600" stroke="#26262a" stroke-width="3.400" stroke-linecap="round"/><path d="M19.300 3.600l2.800 2.600-13.300 13.600-3.800 1.300 1.100-3.700z" fill="#f0a03a" stroke="#a8641a" stroke-width=".7"/><path d="M9.200 12.800l11-11" stroke="#fbd08a" stroke-width="1" fill="none" transform="translate(-.6 2.400)"/><path d="M19.300 3.600l1.200-1.200c.9-.8 3.500 1.600 2.700 2.600l-1.100 1.200z" fill="#e4606a"/><path d="M5 21.100l1.100-3.700.9.300 1.300 1.300.4 1z" fill="#e8c89a"/><path d="M5 21.100l.5-1.700 1.300 1.200z" fill="#2a2018"/></svg>
<svg style="left:549px;top:53px" width="26" height="24" viewBox="0 0 26 24"><text x="1" y="10.700" font-family="DejaVu Sans, sans-serif" font-weight="bold" font-size="11" fill="#2c2c2e" textLength="22.300" lengthAdjust="spacingAndGlyphs">Abc</text><path d="M11 16.200l3.700 3.700 7.800-8" fill="none" stroke="#3f8f1c" stroke-width="3.400"/><path d="M11 16.200l3.700 3.700 7.800-8" fill="none" stroke="#7fd63e" stroke-width="1.700"/></svg>
<svg style="left:582px;top:53px" width="24" height="24" viewBox="0 0 24 24"><path d="M10.600 2.200h7.200v19.600h-6.300v-9.500h-.9a5.050 5.050 0 0 1 0-10.100z" fill="#4a9ad2" stroke="#1d6ba4" stroke-width="1"/><path d="M10.300 3.200a3.900 3.900 0 0 0 0 7.800h1.300v-7.800z" fill="#7cbde8" opacity=".8"/><rect x="14" y="5" width="1.300" height="16" fill="#cdeafa"/></svg>
<div style="left:614px;top:57px;width:1px;height:18px;background:#c6c6c6;"></div>
<svg style="left:622px;top:53px" width="24" height="24" viewBox="0 0 24 24"><rect x="1.500" y="3.500" width="21" height="16.500" fill="#fff" stroke="#777"/><rect x="2" y="4" width="20" height="3.500" fill="#9c9c9c"/><path d="M2 7.500h20" stroke="#777" fill="none"/><path d="M2 11.500h20M2 15.500h20M8.500 4v16M15.500 4v16" stroke="#9a9a9a" fill="none"/><path d="M2 21h20" stroke="#000" stroke-opacity=".15"/></svg>
<svg style="left:654px;top:63px" width="6" height="4" viewBox="0 0 6 4"><path d="M0 0.3h5.6L2.8 3.3z" fill="#000"/></svg>
<svg style="left:667px;top:53px" width="24" height="24" viewBox="0 0 24 24"><rect x=".5" y="2.500" width="23" height="18" rx="1" fill="#e8e8e8" stroke="#7a7a7a"/><rect x="2.500" y="4.500" width="19" height="14" fill="url(#gSun)" stroke="#5a4020" stroke-width=".6"/><circle cx="8" cy="16.500" r="2.500" fill="#fff2a0"/><path d="M14.500 18.500v-6l-3-4M14.500 13l3-3.500M14.500 11l-.5-4M16 11.500l2.500-.5" stroke="#3a2410" stroke-width="1.100" fill="none"/></svg>
<svg style="left:700px;top:53px" width="24" height="24" viewBox="0 0 24 24"><ellipse cx="12" cy="21.500" rx="8" ry="1.800" fill="#000" opacity=".13"/><circle cx="11.800" cy="11.800" r="10" fill="url(#gRed)"/><path d="M12 12L21.800 11.300A10 10 0 0 1 16.500 20.600z" fill="#4a7ab8"/><path d="M12 12L16.500 20.600A10 10 0 0 1 9.600 21.600z" fill="#7ab848"/></svg>
<svg style="left:733px;top:53px" width="24" height="24" viewBox="0 0 24 24"><rect x="1.500" y="1.500" width="21" height="21" fill="#fdfdfd" stroke="#111" stroke-width="1.500" stroke-dasharray="1.900 1.600"/><path d="M4.500 4.500h15v4.300h-1c-.3-1.800-1-2.500-2.500-2.500h-2v11.200c0 1.100.5 1.400 2 1.400v1.100h-8v-1.100c1.500 0 2-.3 2-1.400v-11.200h-2c-1.500 0-2.200.7-2.500 2.500h-1z" fill="url(#gT)" stroke="#2a2a2a" stroke-width=".5"/></svg>
<div style="left:765px;top:57px;width:1px;height:18px;background:#c6c6c6;"></div>
<svg style="left:773px;top:53px" width="24" height="24" viewBox="0 0 24 24"><path d="M5.500 1v6h18v-6" fill="#fafafa" stroke="#8a8a8a"/><path d="M8.500 2.500h12M8.500 4.500h12" stroke="#bdbdbd"/><path d="M5.500 23v-6.500h13.500l4.500 4.500v2" fill="#fafafa" stroke="#8a8a8a"/><path d="M8.500 18.500h9M8.500 20.500h9" stroke="#bdbdbd"/><path d="M19 16.500v4.500h4.500" fill="#e4e4e4" stroke="#8a8a8a"/><path d="M1.500 8.800l5 3.200-5 3.200z" fill="#9cc0ee" stroke="#2f62a8"/><path d="M7.500 12h16" stroke="#27508f" stroke-width="2" stroke-dasharray="2.400 1.200"/></svg>
<svg style="left:806px;top:53px" width="24" height="24" viewBox="0 0 24 24"><path d="M2.500 1.500h12l6 6v15h-18z" fill="url(#gPaper)" stroke="#8a8a8a"/><path d="M14.500 1.500v6h6" fill="#f6f6f6" stroke="#8a8a8a"/><path d="M10 8.500l-1 9.500M13.800 8.500l-1 9.500M7 11.500h9M6.500 15h9" stroke="#2a5a9a" stroke-width="1.050" fill="none"/></svg>
<svg style="left:838px;top:63px" width="6" height="4" viewBox="0 0 6 4"><path d="M0 0.3h5.6L2.8 3.3z" fill="#000"/></svg>
<div style="left:851px;top:50px;width:24px;text-align:center;font-family:'Liberation Serif',serif;font-weight:bold;font-size:29.7px;line-height:30px;color:#262626">Ω</div>
<div style="left:883px;top:57px;width:1px;height:18px;background:#c6c6c6;"></div>
<svg style="left:892px;top:53px" width="24" height="24" viewBox="0 0 24 24"><g fill="none" stroke="#4a4a46" stroke-linecap="round"><path d="M1.500 7.300h5.900l2.600 2h4l2-2h6.500" stroke-width="1.200"/><path d="M2.500 10h5l1.500 .8M21.500 10h-5l-1.500 .8" stroke-width="1.100"/><rect x="4.600" y="10.700" width="14.900" height="3.700" rx="1.800" fill="#f2f2f0" stroke-width="1.300"/><ellipse cx="12" cy="9.600" rx="1" ry=".5" fill="#eee" stroke-width=".8"/><path d="M1.500 13.400h3M19.600 13.400h3" stroke-width="1.100"/><path d="M8 14.800l-2.200 1.600h-1.600M16 14.800l2.200 1.600h1.600" stroke-width="1.500"/></g></svg>
<svg style="left:925px;top:53px" width="24" height="24" viewBox="0 0 24 24"><path d="M1.500 1.500h11.500l5.500 5.500v15.500h-17z" fill="url(#gPaper)" stroke="#8a8a8a"/><path d="M13 1.500v5.500h5.500" fill="#f4f4f4" stroke="#8a8a8a"/><path d="M4 6.500h7M4 9.500h8M4 12.500h11M4 15.500h11" stroke="#a8a8a8"/><path d="M5 5.500h4M5 12.500h3" stroke="#d04040" stroke-width=".8"/><path d="M10 9.500h4" stroke="#2a5a9a" stroke-width="1.200"/><path d="M4 19.500h11" stroke="#1f4f9a" stroke-width="2"/><path d="M15 10.500h7.500v9h-4" fill="none" stroke="#b01818" stroke-width="1.300"/><path d="M19.500 17l-3 2.500 3 2.500z" fill="#b01818"/></svg>
<svg style="left:958px;top:53px" width="24" height="24" viewBox="0 0 24 24"><rect x="1.500" y="2.500" width="16.500" height="19" fill="#e6e6e6" stroke="#8a8a8a"/><path d="M3 8h2M3 12h2M3 16h2" stroke="#b8b8b8"/><rect x="7" y="6.500" width="8.500" height="9.500" fill="#7e7e7e"/><path d="M7 18.500h8.500" stroke="#1f4f9a" stroke-width="2"/><path d="M16 9.500h7v9h-4" fill="none" stroke="#2a5a8a" stroke-width="1.200"/><path d="M20 16l-3 2.500 3 2.500z" fill="#2a5a8a"/></svg>
<svg style="left:992px;top:53px" width="24" height="24" viewBox="0 0 24 24"><path d="M6 1.500h9.700v20.300l-4.850-4.800-4.850 4.800z" fill="url(#gOr)" stroke="#d86400" stroke-width=".9"/><path d="M16.2 1.4L17.9 4.7L21.5 5.3L19.0 7.9L19.5 11.5L16.2 9.9L12.9 11.5L13.4 7.9L10.9 5.3L14.5 4.7z" fill="#fffde4" stroke="#e6d630" stroke-width="1.500" stroke-linejoin="round"/></svg>
<svg style="left:1024px;top:53px" width="24" height="24" viewBox="0 0 24 24"><rect x="3.500" y="1.500" width="17" height="20.500" fill="#f2f2f2" stroke="#8a8a8a"/><path d="M6 4.500h5" stroke="#2a4a9a" stroke-width="1.400"/><path d="M10 7.500h9M10 10.500h9M10 13.500h9M14 16.500h5M14 19.500h5M6 19.500h4" stroke="#8a8a8a"/><path d="M7.500 6v10.500h4" fill="none" stroke="#2a4a9a" stroke-width="1.400"/><path d="M11 13.800l3 2.700-3 2.700z" fill="#2a4a9a"/></svg>
<div style="left:1056px;top:57px;width:1px;height:18px;background:#c6c6c6;"></div>
<svg style="left:1065px;top:53px" width="24" height="24" viewBox="0 0 24 24"><path d="M3.500 3.500h17.500v12l-5.500 5.500h-12z" fill="url(#gYel)" stroke="#c8b820"/><path d="M21 15.500h-5.500v5.500z" fill="#d8c830" stroke="#b8a810" stroke-width=".7"/></svg>
<svg style="left:1098px;top:53px" width="24" height="24" viewBox="0 0 24 24"><path d="M1.500 .5h11.500l5 5v17h-16.500z" fill="url(#gPaper)" stroke="#8a8a8a"/><path d="M13 .5v5h5" fill="#f4f4f4" stroke="#8a8a8a"/><path d="M4 5.500h7M4 8.500h10M4 11.500h9M4 14.500h6M4 17.500h5" stroke="#a8a8a8"/><path d="M5 5.500h3M9 8.500h4M4 11.500h3M5 14.500h4" stroke="#d03030" stroke-width="1.100"/><path d="M20.500 3.500l2.500 2.500-13 14.500-3.500 1.500 1-3.800z" fill="#f0a030" stroke="#a86010" stroke-width=".8"/><path d="M20.500 3.500l2.500 2.500-1.800 2-2.500-2.500z" fill="#e05070"/><path d="M6.500 22l1-3.800 2.500 2.300z" fill="#3a2a1a"/></svg>
<div style="left:1130px;top:57px;width:1px;height:18px;background:#c6c6c6;"></div>
<svg style="left:1139px;top:53px" width="24" height="24" viewBox="0 0 24 24"><path d="M3.500 19.500l17.500-17.500" stroke="#1a1a1a" stroke-width="1.300"/></svg>
<svg style="left:1171px;top:53px" width="24" height="24" viewBox="0 0 24 24"><path d="M12 1.500l10.500 10.500-10.500 10.500-10.500-10.500z" fill="url(#gBlue)" stroke="#3a65a8"/></svg>
<svg style="left:1203px;top:63px" width="6" height="4" viewBox="0 0 6 4"><path d="M0 0.3h5.6L2.8 3.3z" fill="#000"/></svg>
<svg style="left:1216px;top:53px" width="24" height="24" viewBox="0 0 24 24"><rect x="1.500" y="1.500" width="21.500" height="21.500" rx="2.500" fill="#7aa2d8" stroke="#3a65a8"/><rect x="5.500" y="5.500" width="5" height="5" fill="#e6eefa" stroke="#2a4f8a"/><circle cx="16.500" cy="8" r="2.800" fill="#e6eefa" stroke="#2a4f8a"/><circle cx="8" cy="16.500" r="2.800" fill="#e6eefa" stroke="#2a4f8a"/><path d="M14 19.500v-6l5.500 6z" fill="#e6eefa" stroke="#2a4f8a"/></svg>
<div style="left:12px;top:92px;width:120px;height:24px;background:#fff;box-sizing:border-box;border:1px solid #828282;"></div>
<div style="left:113px;top:94px;width:17px;height:20px;background:#e1e1e1;box-sizing:border-box;border:1px solid #adadad;"></div>
<svg style="left:117px;top:101px" width="9" height="6" viewBox="0 0 9 6"><path d="M.5 .8l4 4 4-4" fill="none" stroke="#404040" stroke-width="1.100"/></svg>
<div style="left:16px;top:97px;font-size:12px;line-height:16px;color:#000;white-space:nowrap;transform-origin:0 0;transform:scaleX(1.0034);">Stile predefinito</div>
<div style="left:206px;top:92px;width:120px;height:24px;background:#fff;box-sizing:border-box;border:1px solid #828282;"></div>
<div style="left:307px;top:94px;width:17px;height:20px;background:#e1e1e1;box-sizing:border-box;border:1px solid #adadad;"></div>
<svg style="left:311px;top:101px" width="9" height="6" viewBox="0 0 9 6"><path d="M.5 .8l4 4 4-4" fill="none" stroke="#404040" stroke-width="1.100"/></svg>
<div style="left:210px;top:97px;font-size:12px;line-height:16px;color:#000;white-space:nowrap;transform-origin:0 0;transform:scaleX(0.9788);">Liberation Serif</div>
<div style="left:334px;top:92px;width:46px;height:24px;background:#fff;box-sizing:border-box;border:1px solid #828282;"></div>
<div style="left:361px;top:94px;width:17px;height:20px;background:#e1e1e1;box-sizing:border-box;border:1px solid #adadad;"></div>
<svg style="left:365px;top:101px" width="9" height="6" viewBox="0 0 9 6"><path d="M.5 .8l4 4 4-4" fill="none" stroke="#404040" stroke-width="1.100"/></svg>
<div style="left:338px;top:97px;font-size:12px;line-height:16px;color:#000;white-space:nowrap;transform-origin:0 0;transform:scaleX(0.8990);">12</div>
<svg style="left:137px;top:92px" width="30" height="30" viewBox="0 0 30 30"><ellipse cx="10.500" cy="21.800" rx="8" ry="1.600" fill="#000" opacity=".10"/><circle cx="10" cy="12.600" r="9.600" fill="url(#gCirc)" stroke="#a4a4a4" stroke-width="1.200"/><path d="M8.300 11.800l5 7" stroke="#6a6a6a" stroke-width="3.300" stroke-linecap="round"/><circle cx="6.800" cy="9.700" r="3.400" fill="#6a6a6a"/><path d="M6.600 9.400l-1.300-4.500" stroke="#eaeaea" stroke-width="2.300"/><g fill="none" stroke="#2f6fc0" stroke-width="2"><path d="M13.500 6.500a4 4 0 0 1 7-2"/><path d="M21 7.500a4 4 0 0 1-7 2"/></g><path d="M22.500 1.500v4.500h-4.500z" fill="#2f6fc0"/><path d="M12 12.500v-4.500h4.500z" fill="#2f6fc0"/></svg>
<svg style="left:170px;top:92px" width="30" height="30" viewBox="0 0 30 30"><ellipse cx="10.500" cy="21.800" rx="8" ry="1.600" fill="#000" opacity=".10"/><circle cx="10" cy="12.600" r="9.600" fill="url(#gCirc)" stroke="#a4a4a4" stroke-width="1.200"/><path d="M8.300 11.800l5 7" stroke="#6a6a6a" stroke-width="3.300" stroke-linecap="round"/><circle cx="6.800" cy="9.700" r="3.400" fill="#6a6a6a"/><path d="M6.600 9.400l-1.300-4.500" stroke="#eaeaea" stroke-width="2.300"/><path d="M16.4 1.1L18.2 4.1L21.5 4.8L19.3 7.4L19.6 10.9L16.4 9.5L13.2 10.9L13.5 7.4L11.3 4.8L14.6 4.1z" fill="#fffde4" stroke="#ead93a" stroke-width="1.500" stroke-linejoin="round"/></svg>
<div style="left:201px;top:96px;width:1px;height:18px;background:#c6c6c6;"></div>
<div style="left:383px;top:96px;width:1px;height:18px;background:#c6c6c6;"></div>
<svg style="left:390px;top:86px" width="30" height="30" viewBox="0 0 30 30"><text x="4.1" y="25" font-family="DejaVu Serif, serif" font-size="27" font-weight="bold" font-style="normal" fill="url(#gA)" stroke="#4a4a4a" stroke-width=".5" stroke-linejoin="round" transform="scale(1.04 1)">a</text></svg>
<svg style="left:424px;top:86px" width="30" height="30" viewBox="0 0 30 30"><text x="4.2" y="24.9" font-family="DejaVu Serif, serif" font-size="25.5" font-weight="normal" font-style="italic" fill="url(#gA)" stroke="#4a4a4a" stroke-width="1.100" stroke-linejoin="round" transform="scale(1.12 1)">a</text></svg>
<svg style="left:458px;top:86px" width="30" height="30" viewBox="0 0 30 30"><text x="5" y="24.8" font-family="DejaVu Serif, serif" font-size="25" font-weight="normal" font-style="normal" fill="url(#gA)" stroke="#505050" stroke-width=".8" stroke-linejoin="round">a</text><rect x="5.400" y="26.700" width="14.200" height="2.100" fill="#4e4e4e"/></svg>
<svg style="left:488px;top:86px" width="30" height="30" viewBox="0 0 30 30"><text x="8.8" y="24.8" font-family="DejaVu Serif, serif" font-size="24" font-weight="normal" font-style="normal" fill="url(#gA)" stroke="#505050" stroke-width=".8" stroke-linejoin="round">a</text><rect x="4.800" y="15.700" width="20.400" height="2.100" fill="#4e4e4e"/></svg>
<div style="left:523px;top:96px;width:1px;height:18px;background:#c6c6c6;"></div>
<svg style="left:527px;top:86px" width="30" height="30" viewBox="0 0 30 30"><text x="4.8" y="24.8" font-family="DejaVu Serif, serif" font-size="25" font-weight="normal" font-style="normal" fill="url(#gA)" stroke="#505050" stroke-width=".8" stroke-linejoin="round">a</text><text x="19.3" y="20.8" font-family="DejaVu Sans, sans-serif" font-size="16" font-weight="normal" font-style="normal" fill="#6aa0e0" stroke="#2f62a8" stroke-width=".9">b</text></svg>
<svg style="left:560px;top:86px" width="30" height="30" viewBox="0 0 30 30"><text x="4.8" y="24.8" font-family="DejaVu Serif, serif" font-size="25" font-weight="normal" font-style="normal" fill="url(#gA)" stroke="#505050" stroke-width=".8" stroke-linejoin="round">a</text><text x="19.3" y="28.8" font-family="DejaVu Sans, sans-serif" font-size="16" font-weight="normal" font-style="normal" fill="#6aa0e0" stroke="#2f62a8" stroke-width=".9">b</text></svg>
<div style="left:597px;top:96px;width:1px;height:18px;background:#c6c6c6;"></div>
<svg style="left:604px;top:86px" width="30" height="30" viewBox="0 0 30 30"><text x="3.8" y="24.8" font-family="DejaVu Serif, serif" font-size="27.5" font-weight="normal" font-style="italic" fill="url(#gA)" stroke="#4a4a4a" stroke-width="1" transform="scale(1.14 1)">a</text><rect x="5" y="26.700" width="11" height="1.800" fill="#555"/><path d="M17 20.500l8 8M25 20.500l-8 8" stroke="#b01010" stroke-width="3.600" stroke-linecap="round"/><path d="M17 20.500l8 8M25 20.500l-8 8" stroke="#f04040" stroke-width="1.800" stroke-linecap="round"/></svg>
<div style="left:638px;top:96px;width:1px;height:18px;background:#c6c6c6;"></div>
<svg style="left:644px;top:86px" width="30" height="30" viewBox="0 0 30 30"><text x="5.5" y="20.8" font-family="DejaVu Serif, serif" font-size="24.5" font-weight="bold" font-style="normal" fill="#76a8e0" stroke="#2c5f9e" stroke-width=".7" stroke-linejoin="round" transform="scale(1.02 1)">a</text><rect x="2" y="23.700" width="24" height="6" fill="#d9141c"/></svg>
<svg style="left:678px;top:102px" width="6" height="4" viewBox="0 0 6 4"><path d="M0 0.3h5.6L2.8 3.3z" fill="#000"/></svg>
<svg style="left:688px;top:86px" width="30" height="30" viewBox="0 0 30 30"><path d="M17.500 5.500c3-1.500 6.500-.5 8.500 0l-7.500 9.500-7.500-4.500z" fill="#e8cc50"/><path d="M13.500 8.500l6.500 4.500-1.800 2.600-6.500-4.400z" fill="#555"/><path d="M11.200 11.600l6.500 4.400-4.500 5.500-5.500.5-1-2.500z" fill="#f0dc58" stroke="#b8a020" stroke-width=".7"/><rect x="2" y="23.700" width="24.500" height="6" fill="#f6ee0c"/></svg>
<svg style="left:722px;top:102px" width="6" height="4" viewBox="0 0 6 4"><path d="M0 0.3h5.6L2.8 3.3z" fill="#000"/></svg>
<div style="left:734px;top:96px;width:1px;height:18px;background:#c6c6c6;"></div>
<svg style="left:741px;top:92px" width="30" height="30" viewBox="0 0 30 30"><rect x="9" y="3" width="14.5" height="2.600" rx="1.200" fill="url(#gBar)" opacity="1"/><rect x="9" y="8" width="7.5" height="2.600" rx="1.200" fill="url(#gBar)" opacity="1"/><rect x="9" y="13" width="14.5" height="2.600" rx="1.200" fill="url(#gBar)" opacity="1"/><rect x="9" y="18" width="7.5" height="2.600" rx="1.200" fill="url(#gBar)" opacity="1"/><circle cx="4.300" cy="5.300" r="2.100" fill="#a4c4ee" stroke="#4a78be"/><circle cx="4.300" cy="15.300" r="2.100" fill="#a4c4ee" stroke="#4a78be"/></svg>
<svg style="left:774px;top:102px" width="6" height="4" viewBox="0 0 6 4"><path d="M0 0.3h5.6L2.8 3.3z" fill="#000"/></svg>
<svg style="left:784px;top:92px" width="30" height="30" viewBox="0 0 30 30"><rect x="10" y="3" width="14" height="2.600" rx="1.200" fill="url(#gBar)" opacity="1"/><rect x="10" y="8" width="8" height="2.600" rx="1.200" fill="url(#gBar)" opacity="1"/><rect x="10" y="13" width="14" height="2.600" rx="1.200" fill="url(#gBar)" opacity="1"/><rect x="10" y="18" width="8" height="2.600" rx="1.200" fill="url(#gBar)" opacity="1"/><text x="1.5" y="10" font-family="Liberation Serif, serif" font-size="11" font-weight="bold" font-style="normal" fill="#2a4f90" >1</text><text x="1.5" y="21" font-family="Liberation Serif, serif" font-size="11" font-weight="bold" font-style="normal" fill="#2a4f90" >2</text></svg>
<svg style="left:818px;top:102px" width="6" height="4" viewBox="0 0 6 4"><path d="M0 0.3h5.6L2.8 3.3z" fill="#000"/></svg>
<div style="left:830px;top:96px;width:1px;height:18px;background:#c6c6c6;"></div>
<div style="left:835px;top:87px;width:34px;height:34px;background:#cce4f7;box-sizing:border-box;border:1px solid #b4d6f2;"></div>
<svg style="left:839px;top:92px" width="30" height="30" viewBox="0 0 30 30"><rect x="2" y="3" width="14.5" height="2.600" rx="1.200" fill="url(#gBar)" opacity="1"/><rect x="2" y="8" width="19.5" height="2.600" rx="1.200" fill="url(#gBar)" opacity="1"/><rect x="2" y="13" width="16.5" height="2.600" rx="1.200" fill="url(#gBar)" opacity="1"/><rect x="2" y="18" width="11.5" height="2.600" rx="1.200" fill="url(#gBar)" opacity="1"/></svg>
<svg style="left:872px;top:92px" width="30" height="30" viewBox="0 0 30 30"><rect x="5" y="3" width="13.5" height="2.600" rx="1.200" fill="url(#gBar)" opacity="1"/><rect x="2" y="8" width="19.5" height="2.600" rx="1.200" fill="url(#gBar)" opacity="1"/><rect x="4" y="13" width="15.5" height="2.600" rx="1.200" fill="url(#gBar)" opacity="1"/><rect x="6" y="18" width="11.5" height="2.600" rx="1.200" fill="url(#gBar)" opacity="1"/></svg>
<svg style="left:905px;top:92px" width="30" height="30" viewBox="0 0 30 30"><rect x="7.5" y="3" width="14.5" height="2.600" rx="1.200" fill="url(#gBar)" opacity="1"/><rect x="2" y="8" width="20" height="2.600" rx="1.200" fill="url(#gBar)" opacity="1"/><rect x="5" y="13" width="17" height="2.600" rx="1.200" fill="url(#gBar)" opacity="1"/><rect x="10.5" y="18" width="11.5" height="2.600" rx="1.200" fill="url(#gBar)" opacity="1"/></svg>
<svg style="left:938px;top:92px" width="30" height="30" viewBox="0 0 30 30"><rect x="2" y="3" width="20" height="2.600" rx="1.200" fill="url(#gBar)" opacity="1"/><rect x="2" y="8" width="20" height="2.600" rx="1.200" fill="url(#gBar)" opacity="1"/><rect x="2" y="13" width="20" height="2.600" rx="1.200" fill="url(#gBar)" opacity="1"/><rect x="2" y="18" width="20" height="2.600" rx="1.200" fill="url(#gBar)" opacity="1"/></svg>
<div style="left:970px;top:96px;width:1px;height:18px;background:#c6c6c6;"></div>
<svg style="left:975px;top:92px" width="30" height="30" viewBox="0 0 30 30"><rect x="11" y="4" width="14" height="2.600" rx="1.200" fill="url(#gBar)" opacity="1"/><rect x="11" y="10.5" width="14" height="2.600" rx="1.200" fill="url(#gBar)" opacity="1"/><rect x="11" y="17" width="14" height="2.600" rx="1.200" fill="url(#gBar)" opacity="1"/><path d="M6.500 1.500l3.500 3.800h-2.200v11.400h2.200l-3.500 3.800-3.500-3.800h2.200v-11.400h-2.200z" fill="#f0a050" stroke="#c06a10" stroke-width=".9"/></svg>
<svg style="left:1010px;top:102px" width="6" height="4" viewBox="0 0 6 4"><path d="M0 0.3h5.6L2.8 3.3z" fill="#000"/></svg>
<svg style="left:1023px;top:92px" width="30" height="30" viewBox="0 0 30 30"><rect x="2" y="3" width="20" height="2.600" rx="1.200" fill="url(#gBar)" opacity="1"/><rect x="9.5" y="7.5" width="8.5" height="2.600" rx="1.200" fill="url(#gBar)" opacity="1"/><rect x="9.5" y="14" width="12.5" height="2.600" rx="1.200" fill="url(#gBar)" opacity="1"/><rect x="2" y="18.5" width="12" height="2.600" rx="1.200" fill="url(#gBar)" opacity="1"/><path d="M2.500 10.200l3-3 3 3zM2.500 13.400l3 3 3-3z" fill="#fbd9a8" stroke="#e07818" stroke-width="1.100"/></svg>
<svg style="left:1056px;top:92px" width="30" height="30" viewBox="0 0 30 30"><g opacity=".32"><rect x="2" y="3" width="20" height="2.600" rx="1.200" fill="url(#gBar)" opacity="1"/><rect x="9.5" y="8" width="8.5" height="2.600" rx="1.200" fill="url(#gBar)" opacity="1"/><rect x="9.5" y="13" width="12.5" height="2.600" rx="1.200" fill="url(#gBar)" opacity="1"/><rect x="2" y="18" width="12" height="2.600" rx="1.200" fill="url(#gBar)" opacity="1"/><path d="M2.500 7.500l3 2.500 3-2.500zM2.500 15.500l3-2.500 3 2.500z" fill="#eee" stroke="#777" stroke-width="1"/></g></svg>
<div style="left:1088px;top:96px;width:1px;height:18px;background:#c6c6c6;"></div>
<svg style="left:1095px;top:92px" width="30" height="30" viewBox="0 0 30 30"><rect x="2.5" y="3" width="23" height="2.600" rx="1.200" fill="url(#gBar)" opacity="1"/><rect x="11" y="8" width="14.5" height="2.600" rx="1.200" fill="url(#gBar)" opacity="1"/><rect x="11" y="13" width="14.5" height="2.600" rx="1.200" fill="url(#gBar)" opacity="1"/><rect x="2.5" y="18" width="23" height="2.600" rx="1.200" fill="url(#gBar)" opacity="1"/><path d="M3.500 7.800l3.500 4-3.500 4" fill="none" stroke="#e07818" stroke-width="2"/></svg>
<svg style="left:1128px;top:92px" width="30" height="30" viewBox="0 0 30 30"><rect x="2.5" y="3" width="23" height="2.600" rx="1.200" fill="url(#gBar)" opacity="1"/><rect x="11" y="8" width="14.5" height="2.600" rx="1.200" fill="url(#gBar)" opacity="1"/><rect x="11" y="13" width="14.5" height="2.600" rx="1.200" fill="url(#gBar)" opacity="1"/><rect x="2.5" y="18" width="23" height="2.600" rx="1.200" fill="url(#gBar)" opacity="1"/><path d="M8.500 7.800l-3.500 4 3.500 4" fill="none" stroke="#e07818" stroke-width="2"/></svg>
<div style="left:0px;top:1040px;width:1920px;height:40px;background:#040102;"></div>
<div style="left:0px;top:1040px;width:48px;height:40px;background:#000;"></div>
<div style="left:48px;top:1040px;width:344px;height:40px;background:#f2f2f2;"></div>
<div style="left:48px;top:1040px;width:344px;height:1px;background:#cfcfcf;"></div>
<div style="left:88.5px;top:1050.6px;font-size:15px;line-height:20px;color:#2b2b2b;white-space:nowrap;transform-origin:0 0;transform:scaleX(0.9793);">Scrivi qui per eseguire la ricerca</div>
<svg style="left:16px;top:1052px;" width="16" height="16" viewBox="0 0 16 16"><path d="M0 2.300l6.300-.9v6.200h-6.300zM7.200 1.300l8.800-1.300v7.600h-8.800zM0 8.400h6.300v6.200l-6.300-.9zM7.200 8.400h8.800v7.600l-8.800-1.300z" fill="#fff"/></svg>
<svg style="left:56px;top:1048px;" width="24" height="24" viewBox="0 0 24 24"><circle cx="12" cy="12" r="9.300" fill="none" stroke="#000" stroke-width="3" /><circle cx="12" cy="12" r="9.300" fill="none" stroke="#000" stroke-opacity=".35" stroke-width="4.200"/></svg>
<svg style="left:365px;top:1051px;" width="14" height="18" viewBox="0 0 14 18"><rect x="4.500" y=".7" width="5" height="10" rx="2.500" fill="none" stroke="#3a3a3a" stroke-width="1.200"/><path d="M2 8.500c0 3 2 5 5 5s5-2 5-5M7 13.500v3.500M4 17h6" fill="none" stroke="#3a3a3a" stroke-width="1.200"/></svg>
<svg style="left:405px;top:1052px;" width="22" height="16" viewBox="0 0 22 16"><rect x="4.500" y="1.500" width="12.500" height="13" fill="none" stroke="#fff" stroke-width="1.300"/><path d="M2.500 3.500h-1.500v9h1.500M19 3.500h1.500v9h-1.500" fill="none" stroke="#fff" stroke-width="1.300"/></svg>
<svg style="left:456px;top:1048px;" width="23" height="24" viewBox="0 0 23 24"><path d="M1.200 10.600c.6-5.600 4.700-9.300 10-9.300 6 0 10 4.200 10 10.300v2.400h-13.600c.2 3 2.600 4.800 6 4.800 2.300 0 4.400-.6 6.400-1.800v4.600c-2.200 1.200-4.700 1.700-7.500 1.700-6.200 0-10.200-3.800-10.200-9.700 0-3.600 1.800-6.500 5-8.200-1.300 1.300-2 2.800-2.200 4.500h8.800c0-2.700-1.500-4.300-4.200-4.300-3.300 0-6.300 1.700-8.500 5z" fill="#1f83dc"/></svg>
<svg style="left:504px;top:1048px;" width="24" height="24" viewBox="0 0 24 24"><circle cx="12" cy="12" r="11.300" fill="#e3443a"/><path d="M12 12L2.200 6.350A11.300 11.300 0 0 0 9.700 23.060z" fill="#2da94f"/><path d="M12 12L9.700 23.060A11.300 11.300 0 0 0 23.300 12c0-2-.5-3.800-1.300-5.400z" fill="#fdd03b"/><path d="M12 6.700h10.200a11.300 11.300 0 0 0-20-.35l5 4.200z" fill="#e3443a"/><circle cx="12" cy="12" r="5.300" fill="#f4f4f4"/><circle cx="12" cy="12" r="4.100" fill="#4a8af4"/></svg>
<svg style="left:553px;top:1050px;" width="24" height="20" viewBox="0 0 24 20"><path d="M.5 2c0-.8.500-1.300 1.300-1.300h6.200l1.800 1.800h11.400c.8 0 1.300.5 1.300 1.300v12.200h-22z" fill="#f2c94e"/><path d="M.5 4.500h22v11.500h-22z" fill="#fbe28a"/><path d="M4.500 18.500v-7.500c0-.6.400-1 1-1h12c.6 0 1 .4 1 1v7.500h-4v-4.500h-6v4.500z" fill="#3a9ae0"/></svg>
<svg style="left:601px;top:1046px;" width="25" height="26" viewBox="0 0 25 26"><path d="M8.500 7.500v-2.500a4 4 0 0 1 8 0v2.500" fill="none" stroke="#fff" stroke-width="1.300"/><path d="M1 7.500h23v16c0 1-.5 1.500-1.500 1.500h-20c-1 0-1.500-.5-1.500-1.500z" fill="#fff"/><rect x="7.500" y="10.500" width="4.600" height="4.600" fill="#e8502a"/><rect x="13" y="10.500" width="4.600" height="4.600" fill="#7cb82a"/><rect x="7.500" y="16" width="4.600" height="4.600" fill="#28a4e8"/><rect x="13" y="16" width="4.600" height="4.600" fill="#f8b820"/></svg>
<svg style="left:651px;top:1050px;" width="24" height="19" viewBox="0 0 24 19"><path d="M0 6.500l12-6.500 12 6.500v12.500h-24z" fill="#fff"/><path d="M2.300 7.200h19.400l-8.200 5.800 4.200 3.400-6.500-3.600z" fill="#040102"/></svg>
<svg style="left:699px;top:1048px;" width="26" height="22" viewBox="0 0 26 22"><path d="M6 4.300c1.300 1.600 2.600 2.300 4.200 2.300 2.600-.5 5.200-.4 7.600.6 1.600-1.200 2.600-2.600 3.200-4.600.6 3 .5 6-.4 8.800-1 3.200-3.400 5.400-6.800 5.900-3.600.4-6.200-1.200-7.200-4.200-.8-2.800-.9-5.800-.6-8.800z" fill="#85816f"/><path d="M13 7c2.200-.2 4.400.2 6.200 1.200l1.400 3.300c-1 3-3.200 5.200-6.400 5.700z" fill="#6c685a" opacity=".7"/><path d="M6.500 9.800c-1.300-.5-2.800-.3-3.800.5 1 1.200 2.500 1.800 4 1.600z" fill="#55524a"/><circle cx="3.300" cy="10.900" r="1.700" fill="#f4f4f4"/><circle cx="4" cy="11.600" r="1.100" fill="#888" opacity=".5"/><ellipse cx="8.600" cy="9.300" rx="1.700" ry="1.500" fill="#f2f2f0"/><ellipse cx="12.600" cy="9.800" rx="1.600" ry="1.400" fill="#f2f2f0"/><circle cx="9.200" cy="9.700" r=".8" fill="#15130f"/><circle cx="13.100" cy="10.100" r=".75" fill="#15130f"/><path d="M11.500 13.800c1 .5 2.200 .2 3-.8" stroke="#3a2a20" stroke-width=".9" fill="none"/><path d="M18.500 15.600l5.300 3.200" stroke="#eadfd8" stroke-width="2" stroke-linecap="round"/></svg>
<svg style="left:749px;top:1048px;" width="25" height="24" viewBox="0 0 25 24"><circle cx="12.400" cy="11.400" r="11.300" fill="#173f8c"/><path d="M2.300 8.500c1.500-5 7-8 12.500-6.800 5.500 1.300 9 6 8.800 11.200-.2 3.600-2 6.600-4.800 8.400 1.800-3 2.200-6.400 1-9.400-1.500-3.600-5-5.600-9-5.400-3.300.2-6.300 1.400-8.500 2z" fill="#3b93ea"/><path d="M6 5.500c3.500-2.500 8.500-2.500 12 .2 2.300 1.800 3.600 4.300 3.800 7-.8-2.600-2.600-4.600-5-5.700-3.400-1.400-7.300-1.300-10.800-1.500z" fill="#6fb8f6" opacity=".8"/><path d="M3.300 10.800l12.700-2.400 2.200 10.800-10-2.700z" fill="#f1ece4"/><path d="M3.300 10.800l8 3 4.700-5.400M11.300 13.800l6.900 5.400" fill="none" stroke="#b9b2ac" stroke-width=".8"/><path d="M3.300 10.800c1.200-2.200 3.600-3.400 6-3.200-1.200 .8-1.800 1.800-2 3z" fill="#dfe6f2"/><path d="M16 8.400c2.300 1.500 3.400 4 3.300 6.800-.2 2-.9 3.600-2.100 5.100l-1.500-6z" fill="#2d6fd0"/></svg>
<div style="left:786px;top:1040px;width:48px;height:38px;background:#3b3b3b;"></div>
<div style="left:447px;top:1078px;width:40px;height:2px;background:#dfc1a0;"></div>
<div style="left:496px;top:1078px;width:31px;height:2px;background:#dfc1a0;"></div>
<div style="left:786px;top:1078px;width:48px;height:2px;background:#dfc1a0;"></div>
<div style="left:527px;top:1078px;width:8px;height:2px;background:#8a8078;"></div>
<svg style="left:801px;top:1048px;" width="20" height="23" viewBox="0 0 20 23"><path d="M1 .5h11l7 7v14.500h-18z" fill="#f2f7fb"/><path d="M1 .5h11l7 7v14.500h-18z" fill="none" stroke="#2a6a9c" stroke-width="1.200"/><path d="M14.500 0h5v5z" fill="#1f6fb0"/><path d="M4 10.500h4M4 13.500h4M4 16.500h12M4 19h8" stroke="#1f6397" stroke-width="1.500"/><rect x="9.500" y="9" width="6.500" height="5" fill="#2a73b0"/></svg>
<svg style="left:1490px;top:1040px" width="280" height="40" viewBox="0 0 280 40"><text x="8" y="31" font-family="Liberation Serif, serif" font-style="italic" font-size="40" fill="#262626" textLength="216" lengthAdjust="spacingAndGlyphs" transform="skewX(-6)">Talha Bu Tariq</text><path d="M236 4c14 8 12 26-4 36" fill="none" stroke="#2a2a2a" stroke-width="1.300"/></svg>
<svg style="left:1669px;top:1051px;" width="17" height="17" viewBox="0 0 17 17"><circle cx="11.500" cy="4" r="2.600" fill="none" stroke="#fff" stroke-width="1.200"/><path d="M7.500 13c0-3 1.500-5 4-5s4 2 4 5" fill="none" stroke="#fff" stroke-width="1.200"/><circle cx="5.500" cy="8" r="2.300" fill="none" stroke="#fff" stroke-width="1.200"/><path d="M1.500 16c0-3 1.500-4.800 4-4.800s4 1.800 4 4.800" fill="none" stroke="#fff" stroke-width="1.200"/></svg>
<svg style="left:1707px;top:1056px;" width="13" height="8" viewBox="0 0 13 8"><path d="M.7 7l5.800-5.800 5.800 5.800" fill="none" stroke="#fff" stroke-width="1.400"/></svg>
<svg style="left:1728px;top:1053px;" width="18" height="12" viewBox="0 0 18 12"><path d="M4.500 11.500c-2.300 0-3.800-1.300-3.800-3.200 0-1.700 1.200-3 3-3.200.6-2.300 2.500-3.800 4.800-3.800 2 0 3.600 1 4.400 2.700 2.600-.2 4.500 1.500 4.500 3.700 0 2.200-1.600 3.800-4 3.800z" fill="#fff"/><path d="M3.500 11.500c1-3.500 4.500-5.500 8-4.500" fill="none" stroke="#040102" stroke-width="1"/></svg>
<svg style="left:1752px;top:1053px;" width="18" height="15" viewBox="0 0 18 15"><path d="M5.500 1.500h11.500v8.500h-11.500M11 10v3.500M7 13.500h8" fill="none" stroke="#fff" stroke-width="1.200"/><rect x="1" y="1" width="5" height="7" fill="#040102" stroke="#fff" stroke-width="1.100"/><path d="M2.500 3h2" stroke="#fff"/></svg>
<svg style="left:1777px;top:1053px;" width="18" height="15" viewBox="0 0 18 15"><path d="M.7 5h3l4-3.800v12.600l-4-3.800h-3z" fill="none" stroke="#fff" stroke-width="1.100"/><path d="M10 5c1.200 1.500 1.200 3.500 0 5M12.300 3c2.200 2.700 2.200 6.300 0 9M14.600 1c3.200 4 3.200 9 0 13" fill="none" stroke="#fff" stroke-width="1.100"/></svg>
<div style="left:1819px;top:1043px;font-size:12px;line-height:16px;color:#fff;white-space:nowrap;transform-origin:0 0;transform:scaleX(0.8991);">17:26</div>
<div style="left:1804px;top:1061px;font-size:12px;line-height:16px;color:#fff;white-space:nowrap;transform-origin:0 0;transform:scaleX(0.9657);">16/01/2018</div>
<svg style="left:1879px;top:1052px;" width="17" height="16" viewBox="0 0 17 16"><path d="M.7 .7h15.600v10.800h-5l-3 3.300v-3.300h-7.600z" fill="none" stroke="#fff" stroke-width="1.300"/></svg>
<div style="left:1916px;top:1040px;width:1px;height:40px;background:#5a5a5a;"></div>
</body></html>
